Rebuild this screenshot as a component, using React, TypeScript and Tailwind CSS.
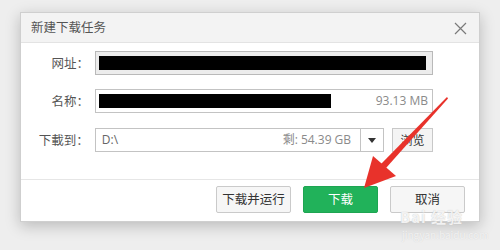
import React from "react";

const font = { fontFamily: '"Microsoft YaHei", "Noto Sans CJK SC", "Open Sans", sans-serif' };

export default function App() {
  return (
    <div className="relative w-[500px] h-[250px] bg-[#eeeeee] overflow-hidden" style={font}>
      <div className="absolute left-[20px] top-[12px] w-[460px] h-[210px] bg-white border border-[#cfcfcf] shadow-[0_4px_14px_rgba(0,0,0,0.22)] flex flex-col">
        {/* title bar */}
        <div className="h-[30px] bg-[#f3f3f3] border-b border-[#e3e3e3] flex items-center justify-between pl-[10px] pr-[12px] shrink-0">
          <span className="text-[12.5px] text-[#555]">新建下载任务</span>
          <svg width="13" height="13" viewBox="0 0 13 13" className="mt-[2px]">
            <path d="M1 1 L12 12 M12 1 L1 12" stroke="#7a7a7a" strokeWidth="1.2" />
          </svg>
        </div>
        {/* body */}
        <div className="flex flex-col pt-[8px] pr-[46px] gap-[14px] h-[136px]">
          <div className="flex items-center">
            <div className="w-[68px] text-right text-[12.5px] text-[#555]">网址：</div>
            <div className="ml-[6px] flex-1 h-[24px] border border-[#b9b9b9] bg-[#ececec] p-[4px] pl-[3px] pr-[6px]">
              <div className="w-full h-full bg-black" />
            </div>
          </div>
          <div className="flex items-center">
            <div className="w-[68px] text-right text-[12.5px] text-[#555]">名称：</div>
            <div className="ml-[6px] flex-1 h-[24px] border border-[#c3c3c3] bg-white flex items-center pl-[3px] pr-[4px]">
              <div className="w-[232px] h-[14px] bg-black" />
              <div className="flex-1" />
              <span className="text-[12px] text-[#8a8a8a]" style={{ fontFamily: '"Open Sans", "Noto Sans", sans-serif' }}>93.13 MB</span>
            </div>
          </div>
          <div className="flex items-center mt-[1px]">
            <div className="w-[68px] text-right text-[12.5px] text-[#555]">下載到：</div>
            <div className="ml-[6px] w-[290px] h-[24px] border border-[#c3c3c3] bg-white flex items-center">
              <span className="pl-[6px] text-[12px] text-[#666]" style={{ fontFamily: '"Open Sans", "Noto Sans", sans-serif' }}>D:\</span>
              <div className="flex-1" />
              <span className="pr-[9px] text-[12px] text-[#8a8a8a]" style={{ fontFamily: '"Open Sans", "Noto Sans CJK SC", sans-serif' }}>剩: 54.39 GB</span>
              <div className="w-[23px] h-full border-l border-[#c3c3c3] flex items-center justify-center">
                <svg width="8" height="5" viewBox="0 0 8 5"><path d="M0 0 L8 0 L4 5 Z" fill="#333" /></svg>
              </div>
            </div>
            <div className="ml-[8px] w-[41px] h-[24px] border border-[#c8c8c8] bg-[#f4f4f4] flex items-center justify-center text-[12px] text-[#333]">浏览</div>
          </div>
        </div>
        {/* footer */}
        <div className="flex-1 border-t border-[#e6e6e6] flex justify-end items-start pt-[6px] pr-[14px] gap-[12px]">
          <div className="w-[75px] h-[27px] border border-[#cacaca] bg-[#f6f6f6] rounded-[2px] flex items-center justify-center text-[12.5px] text-[#333]">下载并运行</div>
          <div className="w-[75px] h-[27px] bg-[#21b25a] border border-[#1ea552] rounded-[2px] flex items-center justify-center text-[12.5px] text-white">下载</div>
          <div className="w-[75px] h-[27px] border border-[#cacaca] bg-[#f6f6f6] rounded-[2px] flex items-center justify-center text-[12.5px] text-[#333]">取消</div>
        </div>
      </div>

      {/* watermark */}
      <div className="absolute left-[400px] top-[209px] text-[15px] leading-[15px] font-bold text-white/80 tracking-[1px]" style={{ textShadow: "0 0 1px #bbb" }}>Bai 经验</div>
      <div className="absolute left-[402px] top-[229px] text-[10px] leading-[12px] text-white/70" style={{ textShadow: "0 0 1px #ccc" }}>jingyan.baidu.com</div>

      {/* red arrow */}
      <svg className="absolute left-0 top-0 pointer-events-none" width="500" height="250" viewBox="0 0 500 250">
        <polygon points="447,97 448,98.5 386,168 381,164" fill="#e8322b" />
        <polygon points="364,188 373,156 396,176" fill="#e8322b" />
      </svg>
    </div>
  );
}
